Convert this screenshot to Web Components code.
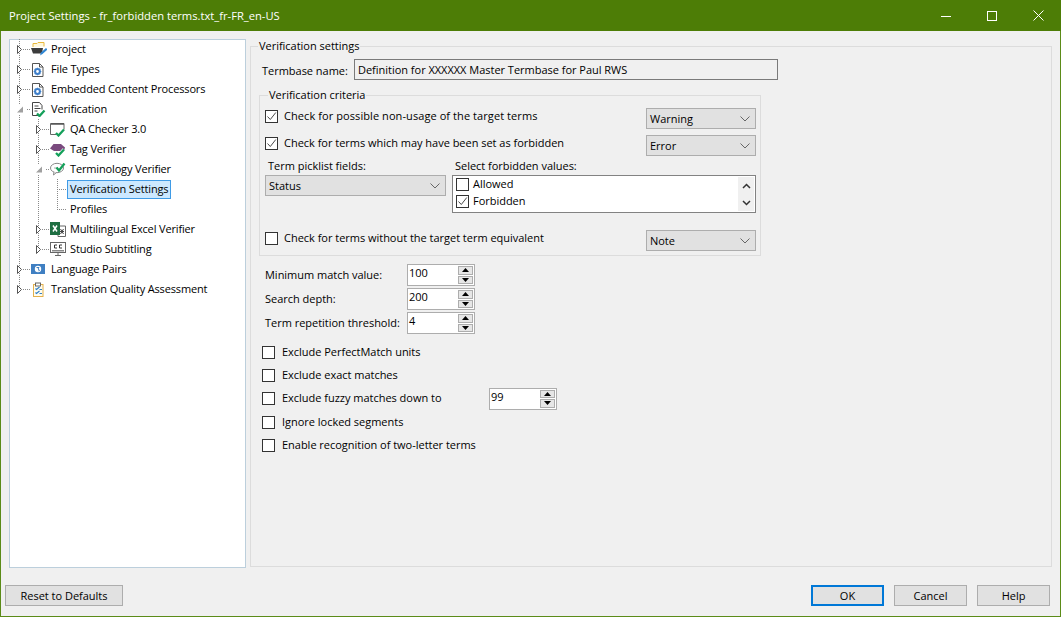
<!DOCTYPE html>
<html><head><meta charset="utf-8">
<style>
html,body{margin:0;padding:0;background:#f0f0f0}
body{font:11px "Open Sans","Noto Sans",sans-serif;color:#000}
</style></head>
<body>
<template id="ic-project"><svg viewBox="0 0 16 16" width="16" height="16"><path d="M2 6V2.500h4l1-1h6v4" fill="#fff8dc" stroke="#e8b93e"/><path d="M0 7h12l-1 5.500H2z" fill="#3c3c3c"/><path d="M9 14.500l1-3 5-4.500 1.500 1.500-5 4.500z" fill="#2f86d4"/></svg></template>
<template id="ic-gear"><svg viewBox="0 0 16 16" width="16" height="16"><path d="M1.500 2.500h7l3.500 3.500v9.500H1.500z" fill="#fff" stroke="#555"/><path d="M8.500 2.500V6H12" fill="none" stroke="#555"/><circle cx="6.500" cy="10.500" r="2.400" fill="none" stroke="#3f7fc9" stroke-width="2"/><path d="M6.500 6.700v1.500M6.500 12.800v1.500M2.700 10.500h1.500M8.800 10.500h1.500M3.800 7.800l1 1M8.200 12.200l1 1M9.200 7.800l-1 1M4.800 12.200l-1 1" stroke="#3f7fc9" stroke-width="1.200"/></svg></template>
<template id="ic-verif"><svg viewBox="0 0 16 16" width="16" height="16"><path d="M7 14.500H1.500v-13h7l2.500 3v4" fill="#fff" stroke="#444"/><path d="M3.500 5h4M3.500 7.500h6M3.500 10h3" stroke="#444"/><path d="M6 12.500l2.500 2.500 5-5.500" fill="none" stroke="#14a05a" stroke-width="2.300"/></svg></template>
<template id="ic-qa"><svg viewBox="0 0 16 16" width="16" height="16"><path d="M.5 2.500h13.500v6M6 13.500H.5v-11" fill="#fff" stroke="#666"/><path d="M1 3h13" stroke="#555" stroke-width="1.500"/><path d="M6 12l2.500 2.500 5.500-6" fill="none" stroke="#14a05a" stroke-width="2.300"/></svg></template>
<template id="ic-tag"><svg viewBox="0 0 16 16" width="16" height="16"><path d="M0 7.500l3.500-4.500h7.500l4 3.500-1 3.500h-10z" fill="#7a4a7e"/><path d="M6 12l2.500 2.500 5.500-6" fill="none" stroke="#fff" stroke-width="3.500"/><path d="M6 12l2.500 2.500 5.500-6" fill="none" stroke="#14a05a" stroke-width="2.300"/></svg></template>
<template id="ic-term"><svg viewBox="0 0 16 16" width="16" height="16"><ellipse cx="7" cy="7" rx="6.500" ry="4.700" fill="#fff" stroke="#888"/><path d="M4 11l-.500 3 3-2.500" fill="#fff" stroke="#888"/><path d="M4 7h4" stroke="#aaa"/><path d="M6.500 6.500l2.500 3 5.500-7" fill="none" stroke="#14a05a" stroke-width="2.300"/></svg></template>
<template id="ic-excel"><svg viewBox="0 0 16 16" width="16" height="16"><path d="M8 5h7.500v10.500H8z" fill="#fff" stroke="#666"/><path d="M10.500 8l3 5M13.500 8l-3 5M10 10.500h4" stroke="#444"/><rect x="0" y="1" width="10" height="13" fill="#1e6e42"/><path d="M3 4.500l4 6M7 4.500l-4 6" stroke="#fff" stroke-width="1.500"/></svg></template>
<template id="ic-cc"><svg viewBox="0 0 16 16" width="16" height="16"><rect x=".5" y="1.500" width="15" height="10" fill="#fff" stroke="#666"/><rect x="2" y="9" width="12" height="1.500" fill="#888"/><path d="M7 4H4.500v3H7M12 4H9.500v3H12" fill="none" stroke="#333"/><path d="M8 11.500V14M5 14.500h6" stroke="#666"/></svg></template>
<template id="ic-lang"><svg viewBox="0 0 16 16" width="16" height="16"><rect x="0" y="3" width="14" height="10" fill="#3f7fc2"/><circle cx="7" cy="8" r="3.200" fill="#fff"/><path d="M5.500 6.500h2.500l-1 1.500 1.500 1-1 1.200" fill="none" stroke="#3f7fc2"/></svg></template>
<template id="ic-tqa"><svg viewBox="0 0 16 16" width="16" height="16"><rect x="2.500" y="3.500" width="9.500" height="12" fill="#fffdf0" stroke="#e3b04b"/><rect x="4.500" y="2" width="5" height="3" fill="#fff" stroke="#666"/><path d="M4.500 7.500l1 1 3-2.500M4.500 11.500l1 1 3-2.500" fill="none" stroke="#2f7fc8" stroke-width="1.200"/><path d="M8.500 8.500H11M8.500 12.500H11" stroke="#2f7fc8"/></svg></template>

<app-window>
  <title-bar slot="title">Project Settings - fr_forbidden terms.txt_fr-FR_en-US</title-bar>
  <settings-tree slot="tree">
    <tree-row level="0" exp="c" v="19" icon="project">Project</tree-row>
    <tree-row level="0" exp="c" v="19" icon="gear">File Types</tree-row>
    <tree-row level="0" exp="c" v="19" icon="gear">Embedded Content Processors</tree-row>
    <tree-row level="0" exp="e" v="19" icon="verif">Verification</tree-row>
    <tree-row level="1" exp="c" v="19 38" icon="qa">QA Checker 3.0</tree-row>
    <tree-row level="1" exp="c" v="19 38" icon="tag">Tag Verifier</tree-row>
    <tree-row level="1" exp="e" v="19 38" icon="term">Terminology Verifier</tree-row>
    <tree-row level="2" v="19 38 57" selected>Verification Settings</tree-row>
    <tree-row level="2" v="19 38 57h">Profiles</tree-row>
    <tree-row level="1" exp="c" v="19 38" icon="excel">Multilingual Excel Verifier</tree-row>
    <tree-row level="1" exp="c" v="19 38h" icon="cc">Studio Subtitling</tree-row>
    <tree-row level="0" exp="c" v="19" icon="lang">Language Pairs</tree-row>
    <tree-row level="0" exp="c" v="19h" icon="tqa">Translation Quality Assessment</tree-row>
  </settings-tree>
  <verification-panel slot="panel"></verification-panel>
  <win-button slot="left" style="width:118px">Reset to Defaults</win-button>
  <win-button slot="right" default>OK</win-button>
  <win-button slot="right">Cancel</win-button>
  <win-button slot="right">Help</win-button>
</app-window>

<script>
function def(name, css, html, init){
  customElements.define(name, class extends HTMLElement{
    constructor(){super();const r=this.attachShadow({mode:'open'});r.innerHTML='<style>'+css+'</style>'+html;}
    connectedCallback(){ if(init) init.call(this,this.shadowRoot); }
  });
}
const FONT='font:11px "Open Sans","Noto Sans",sans-serif;letter-spacing:-.02px;';

def('app-window',`
:host{display:flex;flex-direction:column;box-sizing:border-box;width:1061px;height:617px;border:1px solid #5b8b18;border-top:0;background:#f0f0f0;${FONT}}
.main{display:flex;gap:4px;padding:8px 8px 0 8px;height:529px;box-sizing:content-box}
.foot{display:flex;justify-content:space-between;padding:17px 10px 0 4px}
.r{display:flex;gap:10px}
`,`<slot name="title"></slot><div class="main"><slot name="tree"></slot><slot name="panel"></slot></div>
<div class="foot"><slot name="left"></slot><div class="r"><slot name="right"></slot></div></div>`);

def('title-bar',`
:host{display:flex;align-items:center;height:31px;margin:0 -1px;background:#4d7d06;color:#fff;font-size:11.2px;letter-spacing:0;padding-left:9px;flex:none}
.t{flex:1}
.c{display:flex}
.c div{width:46px;height:31px;display:flex;align-items:center;justify-content:center}
svg{display:block}
`,`<div class="t"><slot></slot></div><div class="c">
<div><svg width="10" height="10"><path d="M0 5.500h10" stroke="#fff"/></svg></div>
<div><svg width="10" height="10"><rect x=".5" y=".5" width="9" height="9" fill="none" stroke="#fff"/></svg></div>
<div><svg width="11" height="11"><path d="M.5.500l10 10M10.500.500l-10 10" stroke="#fff" fill="none"/></svg></div>
</div>`);

def('settings-tree',`
:host{display:block;box-sizing:border-box;width:237px;height:529px;border:1px solid #bccfdc;background:#fff;flex:none;letter-spacing:-.15px}
.w{margin-top:-1px}
`,`<div class="w"><slot></slot></div>`);

def('tree-row',`
:host{display:flex;align-items:center;height:20px;white-space:nowrap}
svg{display:block;flex:none}
.g{height:20px}
.i{width:16px;height:16px;margin-right:1px;flex:none}
.l{border:1px solid transparent;padding:0 2px;height:19px;line-height:16px;box-sizing:border-box}
:host([selected]) .l{background:#cce8ff;border-color:#3f9be6}
`,`<span id="g"></span><span class="i" id="i"></span><span class="l"><slot></slot></span>`,
function(r){
  const lvl=+this.getAttribute('level');
  const w=[21,40,57][lvl];
  let p='';
  (this.getAttribute('v')||'').split(' ').forEach(s=>{
    const half=s.endsWith('h');const x=parseInt(s)-10+.5;
    p+=`<path d="M${x} 0V${half?10:20}" stroke="#8a8a8a" stroke-dasharray="1 1"/>`;
  });
  const hx=[9,28,47][lvl];
  p+=`<path d="M${lvl==2?hx:hx+4} 10.500H${w}" stroke="#8a8a8a" stroke-dasharray="1 1"/>`;
  const e=this.getAttribute('exp');
  if(e=='c') p+=`<path d="M${hx-1.5} 6.500v8l4-4z" fill="#fff" stroke="#555"/>`;
  if(e=='e') p+=`<rect x="${hx-3}" y="5" width="10" height="11" fill="#fff"/><path d="M${hx+4} 7.500v6h-6z" fill="#a0a0a0"/>`;
  r.getElementById('g').innerHTML=`<svg class="g" width="${w}" height="20">${p}</svg>`;
  const ic=this.getAttribute('icon');
  const ie=r.getElementById('i');
  if(ic) ie.appendChild(document.getElementById('ic-'+ic).content.cloneNode(true));
  else ie.remove();
});

def('group-box',`
:host{display:block}
fieldset{margin:0;border:1px solid #dcdcdc;padding:0;min-width:0;height:100%;box-sizing:border-box}
legend{padding:0 1px;margin-left:var(--lg,7px);line-height:14px;height:14px}
`,`<fieldset><legend id="lg"></legend><slot></slot></fieldset>`,
function(r){r.getElementById('lg').textContent=this.getAttribute('label');});

def('win-check',`
:host{display:flex;align-items:center;gap:var(--cg,6px);white-space:nowrap}
.b{width:13px;height:13px;box-sizing:border-box;border:1px solid #333;background:#fff;flex:none;display:block}
.t{margin-bottom:2px}
svg{display:block}
`,`<span class="b" id="b"></span><span class="t"><slot></slot></span>`,
function(r){ if(this.hasAttribute('checked')) r.getElementById('b').innerHTML='<svg width="11" height="11"><path d="M1.500 5.500l2.800 3 5.500-7" fill="none" stroke="#4a4a4a"/></svg>';});

def('win-select',`
:host{display:flex;align-items:center;justify-content:space-between;box-sizing:border-box;height:21px;width:110px;border:1px solid #adadad;background:#e1e1e1;padding:0 5px 0 3px;flex:none}
svg{display:block}
`,`<span><slot></slot></span><svg width="10" height="6"><path d="M.5.500l4.500 4.500 4.500-4.500" fill="none" stroke="#666"/></svg>`);

def('win-spin',`
:host{display:flex;box-sizing:border-box;width:68px;height:22px;border:1px solid #adadad;background:#fff;flex:none;padding:1px}
.v{flex:1;line-height:14px;height:16px}
.s{width:15px;display:flex;flex-direction:column;gap:1px}
.s div{flex:1;background:#e6e6e6;border:1px solid #adadad;display:flex;align-items:center;justify-content:center}
svg{display:block}
`,`<div class="v"><slot></slot></div><div class="s"><div><svg width="7" height="4"><path d="M3.500 0l3.500 4H0z"/></svg></div><div><svg width="7" height="4"><path d="M0 0h7L3.500 4z"/></svg></div></div>`);

def('win-button',`
:host{display:flex;align-items:center;justify-content:center;box-sizing:border-box;width:73px;height:21px;border:1px solid #adadad;background:#e1e1e1}
:host([default]){border:2px solid #0078d7}
`,`<slot></slot>`);

def('win-listbox',`
:host{display:flex;box-sizing:border-box;width:304px;height:38px;border:1px solid #828282;background:#fff;padding:0 1px 0 3px}
.items{flex:1;display:flex;flex-direction:column}
::slotted(win-check){height:17px;--cg:4px}
.sb{width:16px;margin:1px 0;background:#f0f0f0;display:flex;flex-direction:column;align-items:center;justify-content:space-around}
svg{display:block}
`,`<div class="items"><slot></slot></div><div class="sb"><svg width="9" height="6"><path d="M1 5l3.500-3.500L8 5" fill="none" stroke="#333" stroke-width="1.500"/></svg><svg width="9" height="6"><path d="M1 1l3.500 3.500L8 1" fill="none" stroke="#333" stroke-width="1.500"/></svg></div>`);

def('verification-panel',`
:host{display:block;flex:1;min-width:0;height:528px}
group-box{height:100%}
.tb{display:flex;align-items:center;padding:6px 0 0 11px}
.tb .lb{width:92px;padding-top:2px}
.inp{box-sizing:border-box;width:424px;height:21px;border:1px solid #7a7a7a;padding:0 3px;line-height:19px;background:#f0f0f0}
.crit{--lg:8px;width:502px;margin:8px 0 0 8px;height:168px;display:block}
.inner{padding:6px 4px 0 5px}
.row{display:flex;justify-content:space-between;align-items:center;height:21px}
.row+.row{margin-top:6px}
.row win-check{margin-bottom:4px}
.first{letter-spacing:.08px}
.pick{display:flex;gap:6px;margin-top:3px}
.pick>div{display:flex;flex-direction:column}
.pick .h{height:16px;line-height:14px;padding-left:3px}
.row.note{margin-top:17px}
.spins{display:flex;flex-direction:column;gap:2px;padding:8px 0 0 14px}
.sr{display:flex;align-items:center;white-space:nowrap}
.sr span{width:142px;margin-bottom:1px}
.checks{padding:7px 0 0 11px;--cg:7px}
.checks>div,.checks>win-check{height:23px}
.checks .tall{height:24px}
.fz{display:flex;align-items:center}
.fz win-check{width:227px}
`,`<group-box label="Verification settings">
<div class="tb"><span class="lb">Termbase name:</span><div class="inp">Definition for XXXXXX Master Termbase for Paul RWS</div></div>
<group-box class="crit" label="Verification criteria"><div class="inner">
  <div class="row"><win-check checked class="first">Check for possible non-usage of the target terms</win-check><win-select>Warning</win-select></div>
  <div class="row"><win-check checked>Check for terms which may have been set as forbidden</win-check><win-select>Error</win-select></div>
  <div class="pick">
    <div><span class="h">Term picklist fields:</span><win-select style="width:181px">Status</win-select></div>
    <div><span class="h">Select forbidden values:</span><win-listbox><win-check>Allowed</win-check><win-check checked>Forbidden</win-check></win-listbox></div>
  </div>
  <div class="row note"><win-check>Check for terms without the target term equivalent</win-check><win-select>Note</win-select></div>
</div></group-box>
<div class="spins">
  <div class="sr"><span>Minimum match value:</span><win-spin>100</win-spin></div>
  <div class="sr"><span>Search depth:</span><win-spin>200</win-spin></div>
  <div class="sr"><span>Term repetition threshold:</span><win-spin>4</win-spin></div>
</div>
<div class="checks">
  <win-check>Exclude PerfectMatch units</win-check>
  <win-check>Exclude exact matches</win-check>
  <div class="fz"><win-check>Exclude fuzzy matches down to</win-check><win-spin>99</win-spin></div>
  <win-check class="tall">Ignore locked segments</win-check>
  <win-check>Enable recognition of two-letter terms</win-check>
</div>
</group-box>`);
</script>
</body></html>
